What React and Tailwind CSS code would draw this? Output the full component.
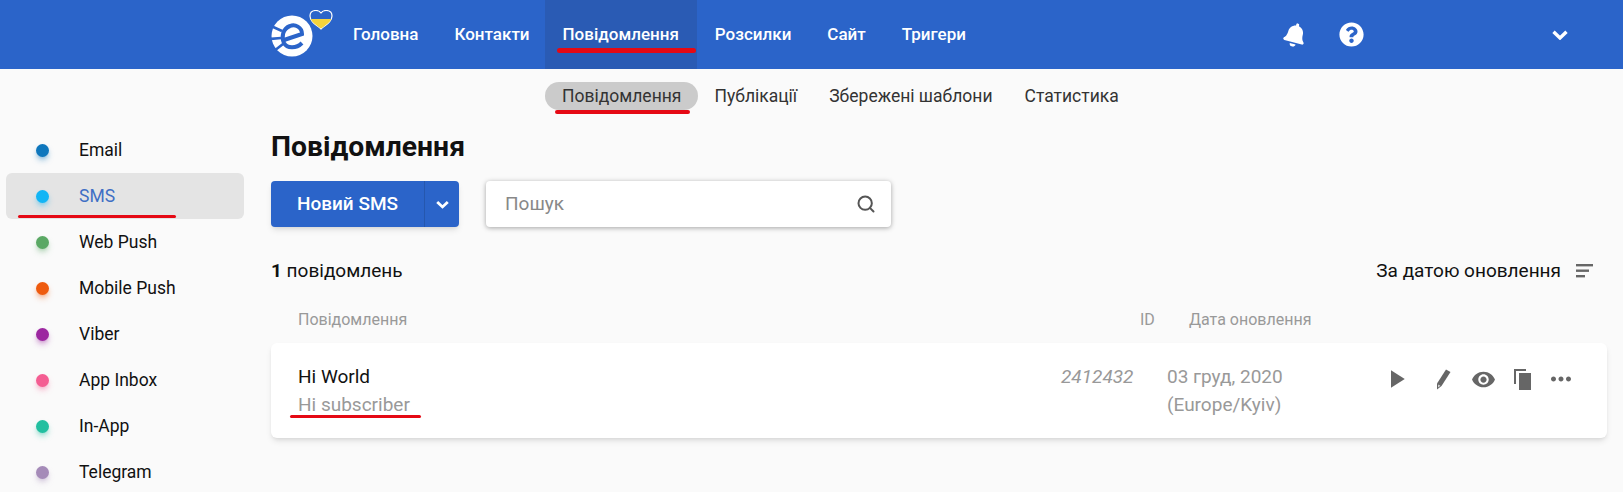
import { FaBell, FaQuestionCircle } from 'react-icons/fa';
import { MdPlayArrow, MdVisibility, MdMoreHoriz } from 'react-icons/md';
import { Search } from 'lucide-react';

const navItems = ['Головна', 'Контакти', 'Повідомлення', 'Розсилки', 'Сайт', 'Тригери'];
const subItems = ['Повідомлення', 'Публікації', 'Збережені шаблони', 'Статистика'];
const channels = [
    { name: 'Email', dot: 'bg-[#0e76bc] shadow-[#0e76bc]/40' },
    { name: 'SMS', dot: 'bg-[#12b5f5] shadow-[#12b5f5]/40', active: true },
    { name: 'Web Push', dot: 'bg-[#5aa864] shadow-[#5aa864]/40' },
    { name: 'Mobile Push', dot: 'bg-[#ee5a0e] shadow-[#ee5a0e]/40' },
    { name: 'Viber', dot: 'bg-[#9c27a0] shadow-[#9c27a0]/40' },
    { name: 'App Inbox', dot: 'bg-[#f45d92] shadow-[#f45d92]/40' },
    { name: 'In-App', dot: 'bg-[#22bfa0] shadow-[#22bfa0]/40' },
    { name: 'Telegram', dot: 'bg-[#a58bb8] shadow-[#a58bb8]/40' },
];

function Logo() {
    return (
        <svg width="62" height="50" viewBox="0 0 62 50" className="shrink-0">
            <circle cx="21" cy="26" r="20.5" fill="#fff" />
            <path d="M0 16 L11 21 M-1 29 L10 28 M3 41 L12 34" stroke="#2b64c9" strokeWidth="2.6" />
            <path d="M13 30 L31 24 C31 17 24 14 19 16 C12 18.5 10 27 13 33 C16 38.5 25 39 31 33" fill="none" stroke="#2b64c9" strokeWidth="4" />
            <path d="M50 19 C44 14 39 11 39 6 C39 2 42 0.5 45 0.5 C47 0.5 49 1.5 50 3 C51 1.5 53 0.5 55 0.5 C58 0.5 61 2 61 6 C61 11 56 14 50 19 Z" fill="#2b64c9" stroke="#fff" strokeWidth="1.2" />
            <path d="M39.8 9 L60.2 9 C59 12.5 55 15 50 18.4 C45 15 41 12.5 39.8 9 Z" fill="#f5d33c" />
        </svg>
    );
}

function Chevron({ className }) {
    return (
        <svg viewBox="0 0 16 10" className={className} fill="none" stroke="currentColor" strokeWidth="3.4">
            <path d="M1.5 1.8 L8 8 L14.5 1.8" />
        </svg>
    );
}

function PencilIcon() {
    return (
        <svg width="15" height="21" viewBox="0 0 15 21" fill="#666" className="shrink-0">
            <path d="M10 0.5 L14.5 3 L5.5 17 L1 20.5 L1 14.5 Z" />
            <path d="M2.2 15.5 L4.4 16.8 L2 18.6 Z" fill="#ddd" />
        </svg>
    );
}

function CopyIcon() {
    return (
        <svg width="17" height="21" viewBox="0 0 17 21" fill="#666" className="shrink-0">
            <path d="M0 0h12v2H2v13H0z" />
            <path d="M5 4h12v17H5z" />
        </svg>
    );
}

function SortIcon() {
    return (
        <svg width="17" height="14" viewBox="0 0 17 14" fill="#666">
            <rect width="17" height="2.4" />
            <rect y="5.5" width="13" height="2.4" />
            <rect y="11" width="9" height="2.4" />
        </svg>
    );
}

export default function App() {
    return (
        <div className="h-[492px] w-full overflow-hidden bg-[#fafafa] font-['Roboto',sans-serif] text-[#111]">
            <header className="flex h-[69px] items-center bg-[#2b64c9] pl-[271px] pr-[55px] text-white">
                <Logo />
                <nav className="ml-[2px] flex h-full">
                    {navItems.map(item => (
                        <div
                            key={item}
                            className={`relative flex h-full items-center px-[18px] text-[17px] font-medium ${item === 'Повідомлення' ? '-ml-[3px] bg-[#2a5bb4]' : ''}`}
                        >
                            {item}
                            {item === 'Повідомлення' && (
                                <span className="absolute left-[12px] top-[48px] h-[5px] w-[139px] rounded-full bg-[#e50914]" />
                            )}
                        </div>
                    ))}
                </nav>
                <div className="ml-auto flex items-center">
                    <FaBell className="size-[24px] rotate-[15deg]" />
                    <FaQuestionCircle className="ml-[32px] size-[25px]" />
                    <Chevron className="ml-[188px] w-[16px] h-[10px]" />
                </div>
            </header>

            <div className="flex h-[40px] items-start pl-[545px] pt-[13px] text-[17.5px] text-[#333]">
                {subItems.map((item, i) => (
                    <div
                        key={item}
                        className={`relative flex h-[28px] items-center rounded-full ${i === 0 ? 'bg-[#cbcbcb] px-[17px]' : 'px-[16px]'}`}
                    >
                        {item}
                        {i === 0 && (
                            <span className="absolute left-[10px] top-[28px] h-[4px] w-[135px] rounded-full bg-[#e50914]" />
                        )}
                    </div>
                ))}
            </div>

            <div className="flex">
                <aside className="w-[271px] shrink-0 pl-[6px] pr-[27px]">
                    <ul className="pt-[18px]">
                        {channels.map(c => (
                            <li
                                key={c.name}
                                className={`relative flex h-[46px] items-center rounded-md pl-[30px] text-[17.5px] ${c.active ? 'bg-[#e4e4e4] text-[#3f6fc4]' : ''}`}
                            >
                                <span className={`size-[13px] rounded-full shadow-md ${c.dot}`} />
                                <span className="ml-[30px]">{c.name}</span>
                                {c.active && (
                                    <span className="absolute left-[12px] top-[42px] h-[3px] w-[158px] rounded-full bg-[#e50914]" />
                                )}
                            </li>
                        ))}
                    </ul>
                </aside>

                <main className="min-w-0 flex-1 pr-[16px]">
                    <h1 className="mt-[21px] text-[28.3px] leading-[34px] font-bold">Повідомлення</h1>

                    <div className="mt-[17px] flex items-center">
                        <div className="flex h-[46px] w-[188px] rounded bg-[#2b64c9] text-white shadow-md">
                            <div className="flex flex-1 items-center justify-center border-r border-[#2557ae] text-[19px] font-medium">Новий SMS</div>
                            <div className="flex w-[34px] items-center justify-center">
                                <Chevron className="w-[13px] h-[9px]" />
                            </div>
                        </div>
                        <div className="ml-[27px] flex h-[46px] w-[405px] items-center justify-between rounded bg-white pl-[19px] pr-[15px] text-[19px] text-[#888] shadow-[0_1px_5px_rgba(0,0,0,0.35)]">
                            Пошук
                            <Search className="size-[20px] text-[#555]" strokeWidth={2.4} />
                        </div>
                    </div>

                    <div className="mt-[30px] flex items-center justify-between pr-[14px] text-[19px] leading-[28px]">
                        <div><b className="font-bold">1</b> повідомлень</div>
                        <div className="flex items-center gap-[15px]">
                            За датою оновлення
                            <SortIcon />
                        </div>
                    </div>

                    <div className="mt-[25px] flex h-[20px] items-center pl-[27px] text-[16px] text-[#999]">
                        <span className="w-[842px]">Повідомлення</span>
                        <span className="w-[49px]">ID</span>
                        <span>Дата оновлення</span>
                    </div>

                    <div className="mt-[13px] flex h-[95px] items-start rounded-md bg-white pl-[27px] pt-[20px] text-[19px] leading-[28px] shadow-md">
                        <div className="relative w-[763px] shrink-0">
                            <div>Hi World</div>
                            <div className="text-[#999]">Hi subscriber</div>
                            <span className="absolute left-[-8px] top-[52px] h-[3px] w-[131px] rounded-full bg-[#e50914]" />
                        </div>
                        <div className="w-[106px] shrink-0 italic text-[#999]">2412432</div>
                        <div className="w-[214px] shrink-0 text-[#999]">
                            <div>03 груд, 2020</div>
                            <div>(Europe/Kyiv)</div>
                        </div>
                        <div className="mt-[2px] flex h-[28px] items-center text-[#666]">
                            <MdPlayArrow className="size-[30px] shrink-0" />
                            <span className="ml-[25px]"><PencilIcon /></span>
                            <MdVisibility className="ml-[20px] size-[25px] shrink-0" />
                            <span className="ml-[18px]"><CopyIcon /></span>
                            <MdMoreHoriz className="ml-[15px] size-[30px] shrink-0" />
                        </div>
                    </div>
                </main>
            </div>
        </div>
    );
}
